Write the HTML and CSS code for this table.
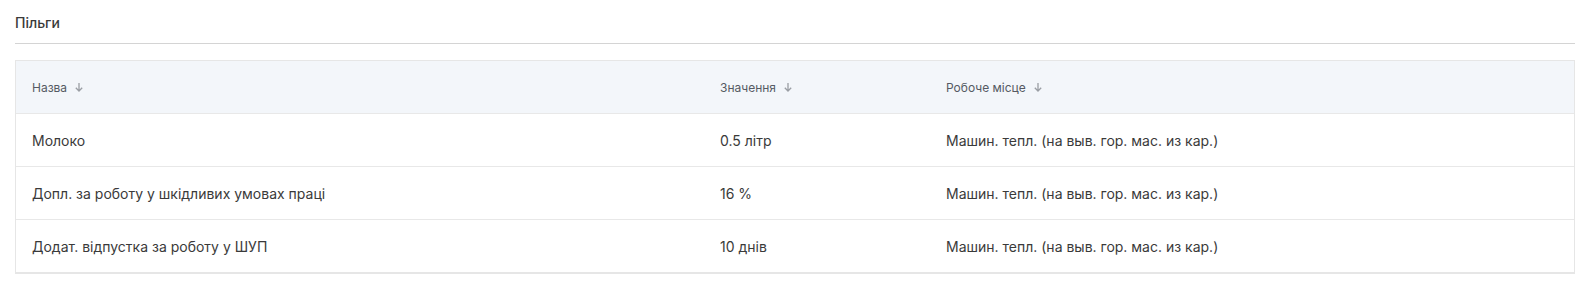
FILE: index.html
```html
<!DOCTYPE html>
<html lang="uk">
<head>
<meta charset="utf-8">
<title>Пільги</title>
<link rel="stylesheet" href="styles.css">
</head>
<body>
<section class="panel">
  <h2 class="title">Пільги</h2>
  <div class="table">
    <div class="row head">
      <div class="cell">Назва <svg class="sort" viewBox="0 0 10 10" width="10" height="10"><path d="M5 1v8M1.8 5.8l3.2 3.2 3.2-3.2" fill="none" stroke="currentColor" stroke-width="1.3"/></svg></div>
      <div class="cell">Значення <svg class="sort" viewBox="0 0 10 10" width="10" height="10"><path d="M5 1v8M1.8 5.8l3.2 3.2 3.2-3.2" fill="none" stroke="currentColor" stroke-width="1.3"/></svg></div>
      <div class="cell">Робоче місце <svg class="sort" viewBox="0 0 10 10" width="10" height="10"><path d="M5 1v8M1.8 5.8l3.2 3.2 3.2-3.2" fill="none" stroke="currentColor" stroke-width="1.3"/></svg></div>
    </div>
    <div class="row">
      <div class="cell">Молоко</div>
      <div class="cell">0.5 літр</div>
      <div class="cell">Машин. тепл. (на выв. гор. мас. из кар.)</div>
    </div>
    <div class="row">
      <div class="cell">Допл. за роботу у шкідливих умовах праці</div>
      <div class="cell">16 %</div>
      <div class="cell">Машин. тепл. (на выв. гор. мас. из кар.)</div>
    </div>
    <div class="row last">
      <div class="cell">Додат. відпустка за роботу у ШУП</div>
      <div class="cell">10 днів</div>
      <div class="cell">Машин. тепл. (на выв. гор. мас. из кар.)</div>
    </div>
  </div>
</section>
</body>
</html>
```
FILE: styles.css
```css
* { box-sizing: border-box; }
html, body { margin: 0; padding: 0; background: #fff; }
body {
  font-family: Inter, "Noto Sans", sans-serif;
  color: #333;
}
.panel {
  padding: 12px 10px 0 15px;
}
.title {
  margin: 0;
  font-size: 14px;
  font-weight: 500;
  line-height: 22px;
  color: #3a3a3a;
  padding-bottom: 9px;
  border-bottom: 1px solid #d4d4d4;
}
.table {
  margin-top: 16px;
  border: 1px solid #e6e6e6;
  border-bottom: 2px solid #e6e6e6;
}
.row {
  display: grid;
  grid-template-columns: 688px 226px 1fr;
  height: 53px;
  align-items: center;
  border-bottom: 1px solid #e8e8e8;
  font-size: 14px;
  color: #3a3a3a;
}
.row.last { border-bottom: 0; height: 52px; }
.row.head {
  background: #f3f6fa;
  font-size: 12px;
  color: #555a63;
  height: 53px;
}
.cell {
  padding: 0 16px;
  display: flex;
  align-items: center;
  gap: 5px;
  white-space: nowrap;
}
.sort { color: #9a9ea4; margin-left: 2px; }
```
